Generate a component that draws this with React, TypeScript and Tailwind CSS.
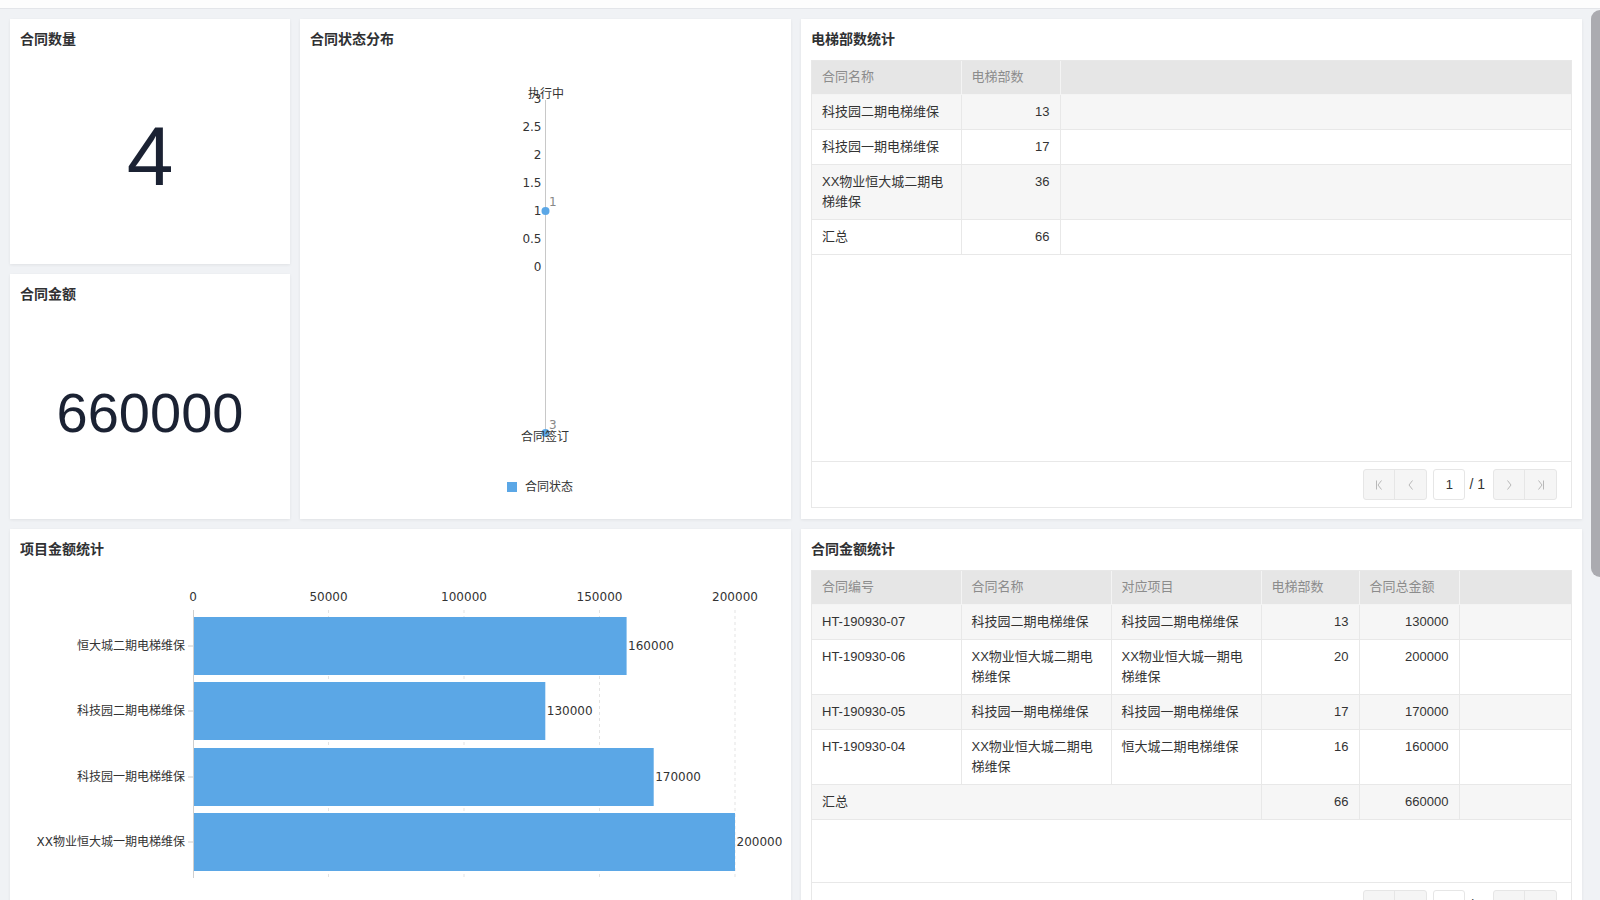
import type { ReactNode } from 'react';
import clsx from 'clsx';

const BLUE = '#5ba7e6';
const CHART_FONT = 'DejaVu Sans, Noto Sans CJK SC, sans-serif';

function Card({ title, className, children }: { title: string; className?: string; children?: ReactNode }) {
  return (
    <div className={clsx('bg-white shadow-[0_1px_3px_rgba(0,0,0,0.07)] flex flex-col', className)}>
      <div className="h-[41px] shrink-0 px-[10px] pt-[12px] text-[14px] leading-[16px] font-bold text-[#303133]">{title}</div>
      {children}
    </div>
  );
}

function PageIcon({ kind }: { kind: 'first' | 'prev' | 'next' | 'last' }) {
  const d = {
    first: 'M3.5 1.5v9M8.5 1.5L5 6l3.5 4.5',
    prev: 'M7.5 1.5L4 6l3.5 4.5',
    next: 'M4.5 1.5L8 6l-3.5 4.5',
    last: 'M8.5 1.5v9M3.5 1.5L7 6l-3.5 4.5',
  }[kind];
  return (
    <svg width="12" height="12" viewBox="0 0 12 12">
      <path d={d} fill="none" stroke="#b8b8b8" strokeWidth="1" />
    </svg>
  );
}

function Pager() {
  return (
    <div className="h-[46px] shrink-0 border-t border-[#e8e8e8] flex items-center justify-end pr-[14px] text-[#333]">
      <div className="flex h-[31px] rounded-[3px] border border-[#e6e6e6] bg-[#f5f5f5]">
        <div className="w-[31px] flex items-center justify-center border-r border-[#e6e6e6]"><PageIcon kind="first" /></div>
        <div className="w-[31px] flex items-center justify-center"><PageIcon kind="prev" /></div>
      </div>
      <div className="ml-[6px] w-[32px] h-[31px] rounded-[3px] border border-[#e6e6e6] bg-white flex items-center justify-center text-[13px]">1</div>
      <div className="ml-[4px] mr-[8px] text-[14px]">/ 1</div>
      <div className="flex h-[31px] rounded-[3px] border border-[#e6e6e6] bg-[#f5f5f5]">
        <div className="w-[31px] flex items-center justify-center border-r border-[#e6e6e6]"><PageIcon kind="next" /></div>
        <div className="w-[31px] flex items-center justify-center"><PageIcon kind="last" /></div>
      </div>
    </div>
  );
}

type Col = { label: string; width?: string; right?: boolean };
type Row = { cells: (string | number)[]; summary?: boolean };

function DataTable({ cols, rows, heightClass, summarySpan = 1 }: { cols: Col[]; rows: Row[]; heightClass: string; summarySpan?: number }) {
  return (
    <div className={clsx('mx-[10px] border border-[#e8e8e8] flex flex-col', heightClass)}>
      <table className="w-full table-fixed border-collapse text-[13px] leading-[20px]">
        <colgroup>
          {cols.map((c, i) => (
            <col key={i} className={c.width} />
          ))}
          <col />
        </colgroup>
        <thead>
          <tr className="bg-[#e6e6e6] text-[#8c8c8c]">
            {cols.map((c, i) => (
              <th key={i} className="h-[33px] px-[10px] font-normal text-left border-r border-b border-[#f4f4f4]">
                {c.label}
              </th>
            ))}
            <th className="border-b border-[#f4f4f4]" />
          </tr>
        </thead>
        <tbody className="text-[#333]">
          {rows.map((r, ri) => (
            <tr key={ri} className={ri % 2 === 0 ? 'bg-[#f6f6f6]' : 'bg-white'}>
              {r.summary ? (
                <>
                  <td colSpan={summarySpan} className="px-[10px] py-[7px] align-top border-r border-b border-[#e8e8e8]">
                    {r.cells[0]}
                  </td>
                  {r.cells.slice(1).map((c, ci) => (
                    <td key={ci} className="px-[10px] py-[7px] align-top text-right border-r border-b border-[#e8e8e8]">
                      {c}
                    </td>
                  ))}
                </>
              ) : (
                r.cells.map((c, ci) => (
                  <td
                    key={ci}
                    className={clsx(
                      'px-[10px] py-[7px] align-top border-r border-b border-[#e8e8e8]',
                      cols[ci].right && 'text-right'
                    )}
                  >
                    {c}
                  </td>
                ))
              )}
              <td className="border-b border-[#e8e8e8]" />
            </tr>
          ))}
        </tbody>
      </table>
      <div className="flex-1" />
      <Pager />
    </div>
  );
}

function StatusChart() {
  const ticks = ['3', '2.5', '2', '1.5', '1', '0.5', '0'];
  return (
    <svg width="491" height="459" fontFamily={CHART_FONT}>
      <line x1="245.5" y1="40" x2="245.5" y2="373" stroke="#c8c8c8" strokeWidth="1" />
      {ticks.map((t, i) => (
        <text key={t} x="241.5" y={38.7 + i * 28} textAnchor="end" dominantBaseline="central" fontSize="12" fill="#333">
          {t}
        </text>
      ))}
      <text x="246" y="34" textAnchor="middle" dominantBaseline="central" fontSize="12" fill="#333">执行中</text>
      <circle cx="245.5" cy="151" r="4" fill={BLUE} />
      <text x="249" y="142" dominantBaseline="central" fontSize="12" fill="#888">1</text>
      <circle cx="245.5" cy="373" r="4" fill={BLUE} />
      <text x="249" y="364.5" dominantBaseline="central" fontSize="12" fill="#888">3</text>
      <text x="245" y="377" textAnchor="middle" dominantBaseline="central" fontSize="12" fill="#333">合同签订</text>
      <rect x="207" y="422" width="10" height="10" fill={BLUE} />
      <text x="225" y="427" dominantBaseline="central" fontSize="12" fill="#333">合同状态</text>
    </svg>
  );
}

const projects = [
  { name: '恒大城二期电梯维保', value: 160000, y: 47 },
  { name: '科技园二期电梯维保', value: 130000, y: 112 },
  { name: '科技园一期电梯维保', value: 170000, y: 178 },
  { name: 'XX物业恒大城一期电梯维保', value: 200000, y: 243 },
];

function BarChart() {
  const x0 = 183;
  const span = 542;
  const ticks = [0, 50000, 100000, 150000, 200000];
  const sx = (v: number) => x0 + (v / 200000) * span;
  return (
    <svg width="781" height="369" fontFamily={CHART_FONT}>
      {ticks.slice(1).map((t) => (
        <line key={t} x1={sx(t)} y1="40" x2={sx(t)} y2="308" stroke="#e3e3e3" strokeDasharray="3 3" />
      ))}
      {ticks.map((t) => (
        <text key={t} x={sx(t)} y="27" textAnchor="middle" dominantBaseline="central" fontSize="12" fill="#333">
          {t}
        </text>
      ))}
      {projects.map((p) => (
        <g key={p.name}>
          <rect x={x0 + 0.5} y={p.y} width={sx(p.value) - x0 - 0.5} height="58" fill={BLUE} />
          <line x1={x0 - 5} y1={p.y + 29} x2={x0} y2={p.y + 29} stroke="#ccc" />
          <text x={x0 - 8} y={p.y + 29} textAnchor="end" dominantBaseline="central" fontSize="12" fill="#333">
            {p.name}
          </text>
          <text x={sx(p.value) + 1.5} y={p.y + 29} dominantBaseline="central" fontSize="12" fill="#333">
            {p.value}
          </text>
        </g>
      ))}
      <line x1={x0 + 0.5} y1="40" x2={x0 + 0.5} y2="308" stroke="#cfcfcf" />
    </svg>
  );
}

export default function App() {
  return (
    <div className="h-screen overflow-hidden bg-[#f0f2f5] font-[family-name:'Liberation_Sans','Noto_Sans_CJK_SC',sans-serif]">
      <div className="h-[9px] bg-[#fdfdfd] border-b border-[#e3e5e9]" />
      <div className="pl-[10px] pt-[10px] grid grid-cols-[280px_491px_781px] gap-[10px]">
        <div className="flex flex-col gap-[10px]">
          <Card title="合同数量" className="h-[245px]">
            <div className="flex-1 flex items-center justify-center pb-[12px] text-[84px] leading-none text-[#1b2233]">4</div>
          </Card>
          <Card title="合同金额" className="h-[245px]">
            <div className="flex-1 flex items-center justify-center pb-[8px] text-[56px] leading-none text-[#1b2233]">660000</div>
          </Card>
        </div>
        <Card title="合同状态分布" className="h-[500px]">
          <StatusChart />
        </Card>
        <Card title="电梯部数统计" className="h-[500px]">
          <DataTable
            heightClass="h-[448px]"
            cols={[
              { label: '合同名称', width: 'w-[149px]' },
              { label: '电梯部数', width: 'w-[99px]', right: true },
            ]}
            rows={[
              { cells: ['科技园二期电梯维保', 13] },
              { cells: ['科技园一期电梯维保', 17] },
              { cells: ['XX物业恒大城二期电梯维保', 36] },
              { cells: ['汇总', 66], summary: true },
            ]}
          />
        </Card>
        <Card title="项目金额统计" className="col-span-2 h-[410px]">
          <BarChart />
        </Card>
        <Card title="合同金额统计" className="h-[410px]">
          <DataTable
            heightClass="h-[359px]"
            summarySpan={3}
            cols={[
              { label: '合同编号', width: 'w-[149px]' },
              { label: '合同名称', width: 'w-[150px]' },
              { label: '对应项目', width: 'w-[150px]' },
              { label: '电梯部数', width: 'w-[98px]', right: true },
              { label: '合同总金额', width: 'w-[100px]', right: true },
            ]}
            rows={[
              { cells: ['HT-190930-07', '科技园二期电梯维保', '科技园二期电梯维保', 13, 130000] },
              { cells: ['HT-190930-06', 'XX物业恒大城二期电梯维保', 'XX物业恒大城一期电梯维保', 20, 200000] },
              { cells: ['HT-190930-05', '科技园一期电梯维保', '科技园一期电梯维保', 17, 170000] },
              { cells: ['HT-190930-04', 'XX物业恒大城二期电梯维保', '恒大城二期电梯维保', 16, 160000] },
              { cells: ['汇总', 66, 660000], summary: true },
            ]}
          />
        </Card>
      </div>
      <div className="fixed top-[10px] right-0 w-[9px] h-[567px] rounded-l-full rounded-r-[2px] bg-[#ababb0]" />
    </div>
  );
}
